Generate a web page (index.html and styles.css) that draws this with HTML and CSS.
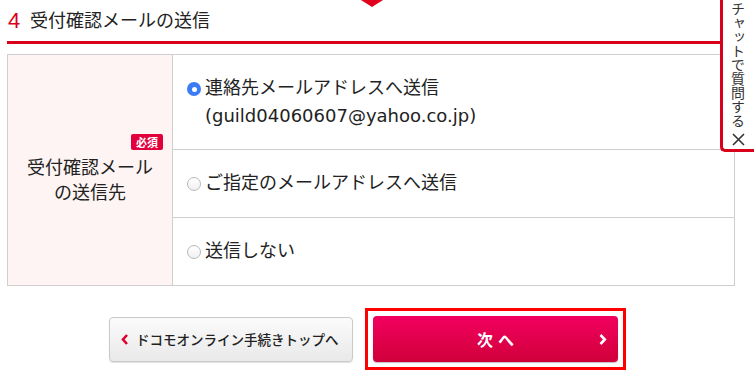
FILE: index.html
```html
<!DOCTYPE html>
<html lang="ja">
<head>
<meta charset="utf-8">
<title>受付確認メールの送信</title>
<link rel="stylesheet" href="styles.css">
</head>
<body>
<div class="page">
  <div class="step-arrow"></div>
  <h2 class="step-title"><span class="step-num">4</span>受付確認メールの送信</h2>

  <table class="form-table">
    <tr>
      <th rowspan="3" class="label-cell">
        <div class="label-box">
          <span class="badge">必須</span>
          <span class="label-text">受付確認メール<br>の送信先</span>
        </div>
      </th>
      <td class="option-cell">
        <label class="option">
          <span class="radio checked"></span>
          <span class="option-text">連絡先メールアドレスへ送信<br><span class="mail">(guild04060607@yahoo.co.jp)</span></span>
        </label>
      </td>
    </tr>
    <tr>
      <td class="option-cell">
        <label class="option">
          <span class="radio"></span>
          <span class="option-text">ご指定のメールアドレスへ送信</span>
        </label>
      </td>
    </tr>
    <tr>
      <td class="option-cell">
        <label class="option">
          <span class="radio"></span>
          <span class="option-text">送信しない</span>
        </label>
      </td>
    </tr>
  </table>

  <div class="actions">
    <a class="btn-back" href="#">
      <svg class="chev-left" width="7" height="11" viewBox="0 0 7 11"><path d="M6 1 L2 5.5 L6 10" fill="none" stroke="#e0002b" stroke-width="2.6"/></svg>
      <span>ドコモオンライン手続きトップへ</span>
    </a>
    <div class="focus-frame">
      <a class="btn-next" href="#">
        <span class="next-label">次<span class="sp"></span>へ</span>
        <svg class="chev-right" width="8" height="11" viewBox="0 0 8 11"><path d="M1.5 1 L5.8 5.5 L1.5 10" fill="none" stroke="#ffffff" stroke-width="2.6"/></svg>
      </a>
    </div>
  </div>
</div>

<aside class="chat-tab">
  <span class="chat-text">チャットで質問する</span>
  <svg class="chat-close" width="13" height="13" viewBox="0 0 13 13"><path d="M1 1 L12 12 M12 1 L1 12" stroke="#333" stroke-width="1.6"/></svg>
</aside>
</body>
</html>
```

FILE: styles.css
```css
html, body {
  margin: 0;
  padding: 0;
  background: #ffffff;
}

body {
  font-family: "Liberation Sans", "Noto Sans CJK JP", sans-serif;
  color: #222;
  width: 754px;
  height: 374px;
  overflow: hidden;
}

.page {
  margin-left: 7px;
  width: 728px;
}

.step-arrow {
  width: 0;
  height: 0;
  margin: 0 auto;
  border-left: 11px solid transparent;
  border-right: 11px solid transparent;
  border-top: 7px solid #e0001e;
  position: relative;
  left: 1px;
}

.step-title {
  margin: 0;
  padding: 1px 0 7px 1px;
  font-size: 18px;
  font-weight: normal;
  line-height: 26px;
  color: #222;
  border-bottom: 3px solid #d9001b;
  display: flex;
  align-items: center;
}

.step-num {
  color: #d9001b;
  font-size: 22px;
  margin-right: 10px;
  width: 12px;
}

.form-table {
  margin-top: 10px;
  width: 728px;
  border-collapse: collapse;
  border: 1px solid #cfcfcf;
}

.form-table th,
.form-table td {
  border: 1px solid #cfcfcf;
  padding: 0;
}

.label-cell {
  width: 164px;
  background: #fdf4f3;
  font-weight: normal;
  vertical-align: middle;
}

.label-box {
  display: flex;
  flex-direction: column;
  align-items: center;
}

.badge {
  align-self: flex-end;
  margin-right: 9px;
  background: #e2003c;
  color: #fff;
  font-size: 11px;
  font-weight: bold;
  line-height: 16px;
  padding: 0 5px;
  border-radius: 2px;
  font-family: "Noto Sans CJK JP", sans-serif;
}

.label-text {
  margin-top: 6px;
  font-size: 18px;
  line-height: 25px;
  text-align: center;
  color: #222;
}

.option-cell {
  padding: 20px 0 20px 14px !important;
}

.option {
  display: flex;
  align-items: flex-start;
  font-size: 18px;
  line-height: 27px;
  color: #222;
}

.option-text {
  display: block;
}

.radio {
  flex: none;
  width: 14px;
  height: 14px;
  box-sizing: border-box;
  border-radius: 50%;
  border: 1px solid #b9b9b9;
  background: linear-gradient(#ffffff, #f0f0f0);
  margin-top: 7px;
  margin-right: 4px;
  position: relative;
}

.radio.checked {
  border: none;
  background: #3a7cf3;
}

.radio.checked::after {
  content: "";
  position: absolute;
  left: 4.5px;
  top: 4.5px;
  width: 5px;
  height: 5px;
  border-radius: 50%;
  background: #fff;
}

.mail {
  display: inline-block;
  vertical-align: top;
  height: 27px;
  line-height: 27px;
  font-family: "DejaVu Sans", "Noto Sans CJK JP", sans-serif;
  font-size: 18px;
}

.actions {
  margin-top: 22px;
  display: flex;
  justify-content: center;
  align-items: center;
  gap: 12px;
  padding-right: 7px;
}

.btn-back {
  box-sizing: border-box;
  width: 244px;
  height: 45px;
  display: flex;
  align-items: center;
  padding-left: 11px;
  gap: 8px;
  border: 1px solid #c9c9c9;
  border-radius: 4px;
  background: linear-gradient(#fbfbfb, #e9e9e9);
  box-shadow: 0 1px 1px rgba(0, 0, 0, 0.12);
  text-decoration: none;
  color: #222;
  font-size: 13.5px;
  font-weight: 500;
  font-family: "Noto Sans CJK JP", sans-serif;
}

.chev-left {
  flex: none;
}

.focus-frame {
  border: 3px solid #ff0000;
  padding: 5px;
}

.btn-next {
  box-sizing: border-box;
  width: 245px;
  height: 46px;
  display: flex;
  align-items: center;
  justify-content: center;
  position: relative;
  border-radius: 4px;
  background: linear-gradient(#f2005f, #d0003a);
  box-shadow: 0 1px 1px rgba(0, 0, 0, 0.25);
  text-decoration: none;
  color: #fff;
  font-size: 16px;
  font-weight: bold;
  font-family: "Noto Sans CJK JP", sans-serif;
}

.next-label {
  display: flex;
  align-items: center;
}

.sp {
  display: inline-block;
  width: 5px;
}

.chev-right {
  position: absolute;
  right: 11px;
  top: 18px;
}

.chat-tab {
  position: fixed;
  top: 0;
  right: 0;
  width: 34px;
  height: 152px;
  box-sizing: border-box;
  background: #fff;
  border-left: 3px solid #d9001b;
  border-bottom: 3px solid #d9001b;
  border-bottom-left-radius: 5px;
  display: flex;
  flex-direction: column;
  align-items: center;
  padding-top: 2px;
  padding-right: 1px;
}

.chat-text {
  flex: none;
  writing-mode: vertical-rl;
  white-space: nowrap;
  font-family: "Noto Sans CJK JP", sans-serif;
  font-size: 14px;
  line-height: 16px;
  color: #333;
}

.chat-close {
  flex: none;
  margin-top: 5px;
}
```
